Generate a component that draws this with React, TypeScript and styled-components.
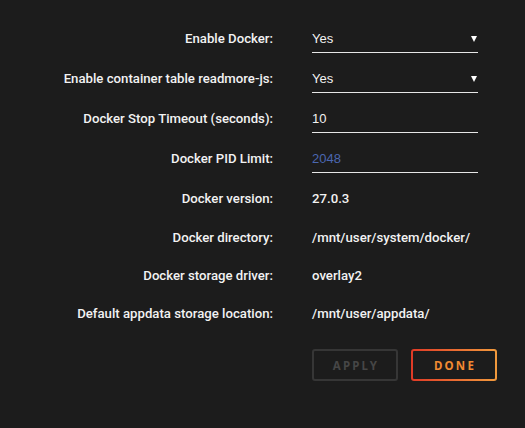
import React from 'react'
import styled, {createGlobalStyle, css} from 'styled-components'

const GlobalStyle = createGlobalStyle`
    html, body {
        margin: 0;
        padding: 0;
        background: #1c1c1c;
    }
    body {
        font-family: Roboto, "Noto Sans", sans-serif;
        font-size: 13.2px;
        font-weight: 500;
        color: #f2f2f2;
    }
`

const Page = styled.div`
    width: 525px;
    height: 428px;
    padding-top: 18px;
    box-sizing: border-box;
`

const Row = styled.div<{tall?: boolean}>`
    display: grid;
    grid-template-columns: 273px 166px;
    column-gap: 39px;
    align-items: center;
    height: ${(props) => (props.tall ? '40px' : '38px')};
`

const Label = styled.div`
    text-align: right;
    white-space: nowrap;
`

const Value = styled.div`
    white-space: nowrap;
`

const Field = styled.div<{placeholder?: boolean}>`
    box-sizing: border-box;
    height: 28px;
    margin-top: 2px;
    border-bottom: 1px solid #e6e6e6;
    display: flex;
    align-items: center;
    justify-content: space-between;
    padding-right: 1px;
    font-family: "Liberation Sans", Arial, sans-serif;
    font-weight: 400;
    font-size: 13px;
    color: ${(props) => (props.placeholder ? '#4b67b0' : '#f2f2f2')};
`

const Actions = styled.div`
    display: flex;
    gap: 13px;
    margin: 17px 0 0 312px;
`

const Button = styled.button<{primary?: boolean}>`
    box-sizing: border-box;
    width: 86px;
    height: 32px;
    border-radius: 3px;
    background: transparent;
    font-family: "Noto Sans", "Open Sans", sans-serif;
    font-weight: 700;
    font-size: 11.5px;
    letter-spacing: 2.2px;
    text-transform: uppercase;
    padding: 0 0 0 2px;
    cursor: pointer;
    border: 2px solid #363636;
    color: #464646;

    ${(props) =>
        props.primary &&
        css`
            border: 2px solid transparent;
            background:
                linear-gradient(#1c1c1c, #1c1c1c) padding-box,
                linear-gradient(90deg, #e03a26, #f19a3c) border-box;
            color: #f28a32;
        `}
`

const Arrow = () => (
    <svg width="6" height="6" viewBox="0 0 6 6">
        <polygon points="0,0 6,0 3,6" fill="#ffffff" />
    </svg>
)

const info = [
    ['Docker directory:', '/mnt/user/system/docker/'],
    ['Docker storage driver:', 'overlay2'],
    ['Default appdata storage location:', '/mnt/user/appdata/'],
]

export default function App() {
    return (
        <Page>
            <GlobalStyle />
            <Row tall>
                <Label>Enable Docker:</Label>
                <Field>
                    Yes
                    <Arrow />
                </Field>
            </Row>
            <Row tall>
                <Label>Enable container table readmore-js:</Label>
                <Field>
                    Yes
                    <Arrow />
                </Field>
            </Row>
            <Row tall>
                <Label>Docker Stop Timeout (seconds):</Label>
                <Field>10</Field>
            </Row>
            <Row tall>
                <Label>Docker PID Limit:</Label>
                <Field placeholder>2048</Field>
            </Row>
            <Row tall>
                <Label>Docker version:</Label>
                <Value>27.0.3</Value>
            </Row>
            {info.map(([label, value]) => (
                <Row key={label}>
                    <Label>{label}</Label>
                    <Value>{value}</Value>
                </Row>
            ))}
            <Actions>
                <Button>Apply</Button>
                <Button primary>Done</Button>
            </Actions>
        </Page>
    )
}
